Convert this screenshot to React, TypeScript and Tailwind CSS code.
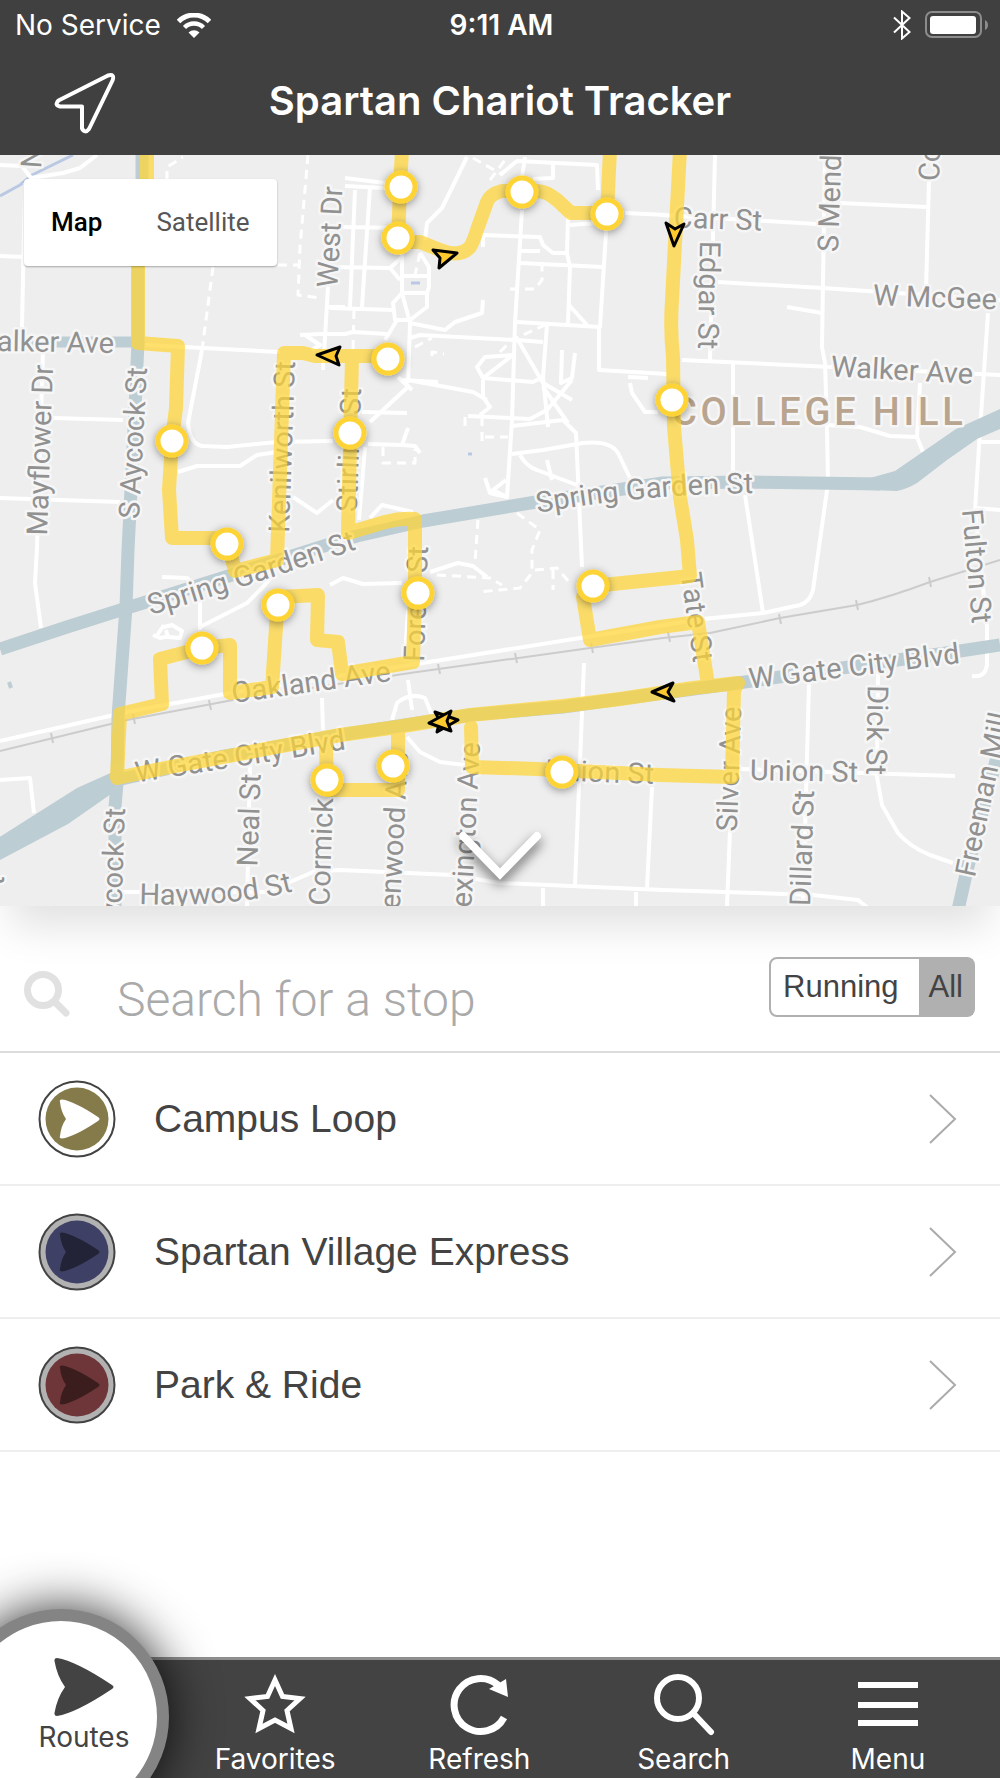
import { useState } from "react";
import type { ReactNode } from "react";
import clsx from "clsx";

interface MapLabel {
  text: string;
  x: number;
  y: number;
  rotate: number;
  anchor?: "start" | "middle" | "end";
}

interface BusRoute {
  name: string;
  color: string;
  running: boolean;
}

const highways = [
  "M142 150V182L138 266V343L133 450L128 550L126 607L118 717L117 783L115 807V910",
  "M0 649L67 627L127 608L200 585L327 545L357 536L423 521L530 503L663 483L750 482L880 484",
  "M738 683L960 651L1000 645",
  "M117 780L220 757L340 735L470 715L563 707L620 699L738 683",
  "M958 910L967 870L997 757L1003 735",
];

const streets = [
  "M0 741L127 712L230 693L410 665L580 638L703 619L763 613L800 605Q810 602 813 590L828 483L827 427L825 363L822 347L825 154",
  "M0 165L22 166L31 178L63 173L80 168L97 155",
  "M25 183L22 327",
  "M0 256L25 257",
  "M43 350L37 547L35 583L41 628",
  "M53 418L123 420",
  "M0 498L120 502",
  "M145 345L280 352",
  "M202 350L188 423Q190 445 203 446L227 447L277 442L333 441",
  "M178 472L197 466L240 466L257 455L277 452",
  "M328 287L323 370",
  "M328 307L345 307",
  "M300 335L320 334L345 334L353 332L387 334",
  "M305 335L320 345L312 350",
  "M293 497L317 513L333 500",
  "M345 178L385 183M345 186L385 188M355 190L350 307M370 187L362 307",
  "M343 227L398 228M330 267L390 268L402 257M330 308L393 310M390 268L400 280",
  "M402 245V293L393 303L395 320H410L427 307V293L429 287V267L420 253",
  "M402 276H429M402 293H427",
  "M402 293L410 323L445 330L455 322L482 313L483 300",
  "M385 340L397 320M410 323L408 383M410 338L420 335L517 340L543 342",
  "M467 157L442 208L427 223L425 240",
  "M522 210L515 323L512 420L507 497",
  "M517 322L600 327L607 217M599 327V370L667 374",
  "M483 247V235L540 237L543 245L553 253H567L570 267L568 323M568 217L567 253",
  "M520 263L603 267M520 251H540M569 305L587 325M570 225L597 223",
  "M625 213L667 215",
  "M500 175L517 161L597 165L598 190M553 163V178L533 179M525 157L522 177",
  "M513 355L485 357L477 367L483 378L533 382L543 377L547 325M513 355L483 378",
  "M518 340L543 383L572 400M543 377L548 427M562 350L561 383L572 378L575 353",
  "M468 416L530 419L547 410L572 380M512 426L563 420L576 433L582 567",
  "M543 387L568 423M483 380V397L490 407L480 415",
  "M408 380L473 392L487 400M403 380L438 382M410 385L370 422M398 377L412 390",
  "M362 412L407 413M408 428L402 445L368 444M402 445L415 446L420 453",
  "M365 447L359 520M370 518L382 505L413 512",
  "M512 454L543 450L583 443Q610 440 618 453L630 478",
  "M520 455Q527 467 537 470L577 485M547 460L552 480",
  "M485 478L490 493L507 497L493 490L506 480",
  "M630 383L632 393L645 412H658M628 377L648 378",
  "M715 155L710 360",
  "M660 215L817 224",
  "M840 203L927 207",
  "M929 180L926 290",
  "M718 282L823 288L1000 300",
  "M787 307L822 313",
  "M682 360L1000 375",
  "M733 363V473",
  "M988 313L980 430L975 510L987 627V665Q985 678 972 676",
  "M978 442H1000M975 508L1000 510",
  "M920 383L917 437L923 452M827 425L860 427L890 436L917 437",
  "M745 495L753 547L763 613",
  "M809 683L803 906",
  "M878 673L877 777L882 805L898 833Q910 847 930 855L953 863",
  "M740 769L955 776",
  "M730 830L727 906",
  "M123 892H267L313 872L340 870L453 875L500 883L663 890L813 895L858 900L868 908",
  "M584 663L575 885M652 787L647 888M543 888V906M636 892V906",
  "M408 680L412 710M392 720L397 703Q410 692 425 698L432 715",
  "M407 737L420 752L440 762L465 765",
  "M330 585L343 578L363 584L402 583M430 572L458 563L473 566L487 577",
  "M408 610L405 657",
  "M162 577L187 578L200 590V630M200 627L247 603L263 587L275 573",
  "M164 625L156 637M153 635L160 638L170 636M164 627L172 625L182 631L180 638L168 637L166 630",
  "M0 780L30 778L34 813",
  "M322 698L323 730M250 763L247 906",
];

const footpaths = [
  "M213 267L202 350",
  "M167 180V167L183 157",
  "M308 155L300 247L298 295L320 298",
  "M278 265H298",
  "M354 310L353 350",
  "M473 158L503 175M490 180L505 160",
  "M510 289H535L542 280V263",
  "M420 253L415 275",
  "M500 352L512 340L545 325",
  "M383 447V463H415V449",
  "M482 417V443M465 417V430M485 437H508",
  "M432 356V352L444 354M415 347L432 338",
  "M478 520L475 563",
  "M517 513L540 530L532 550V573L520 588L478 592",
  "M535 570L557 568L570 583M553 570V590",
  "M437 575L490 578L502 585",
];

const railTicks = [
  [52, 738], [134, 719], [210, 705], [439, 669], [516, 658],
  [592, 648], [669, 637], [780, 619], [857, 605], [930, 582],
];

const labels: MapLabel[] = [
  { text: "alker Ave", x: 114, y: 343, rotate: 1, anchor: "end" },
  { text: "Walker Ave", x: 902, y: 370, rotate: 3 },
  { text: "West Dr", x: 330, y: 237, rotate: -87 },
  { text: "Mayflower Dr", x: 40, y: 450, rotate: -88 },
  { text: "S Aycock St", x: 133, y: 443, rotate: -87 },
  { text: "Kenilworth St", x: 282, y: 447, rotate: -88 },
  { text: "Stirling St", x: 349, y: 450, rotate: -88 },
  { text: "Forest St", x: 416, y: 604, rotate: -88 },
  { text: "Oakland Ave", x: 311, y: 682, rotate: -8 },
  { text: "W Gate City Blvd", x: 240, y: 756, rotate: -9 },
  { text: "W Gate City Blvd", x: 854, y: 666, rotate: -7 },
  { text: "Carr St", x: 718, y: 219, rotate: 2 },
  { text: "Edgar St", x: 709, y: 295, rotate: 91 },
  { text: "S Mend", x: 828, y: 252, rotate: -88, anchor: "start" },
  { text: "Co", x: 929, y: 181, rotate: -88, anchor: "start" },
  { text: "W McGee", x: 873, y: 295, rotate: 2, anchor: "start" },
  { text: "Tate St", x: 697, y: 617, rotate: 82 },
  { text: "Fulton St", x: 977, y: 566, rotate: 85 },
  { text: "Dick St", x: 877, y: 730, rotate: 91 },
  { text: "Silver Ave", x: 729, y: 769, rotate: -88 },
  { text: "Dillard St", x: 802, y: 848, rotate: -88 },
  { text: "Union St", x: 804, y: 771, rotate: 1 },
  { text: "Union St", x: 600, y: 772, rotate: 2 },
  { text: "Freeman Mill", x: 965, y: 876, rotate: -78, anchor: "start" },
  { text: "Neal St", x: 249, y: 820, rotate: -88 },
  { text: "ycock St", x: 115, y: 808, rotate: -88, anchor: "end" },
  { text: "Cormick", x: 323, y: 798, rotate: -88, anchor: "end" },
  { text: "enwood Ave", x: 398, y: 752, rotate: -87, anchor: "end" },
  { text: "exington Ave", x: 470, y: 742, rotate: -87, anchor: "end" },
  { text: "N", x: 31, y: 168, rotate: -86, anchor: "start" },
  { text: "t", x: -6, y: 876, rotate: -88, anchor: "end" },
];

const routePaths = [
  "M147 150V182L138 266V343L178 346L176 408L172 440L169 490L172 538H227L235 571L277 560L284 353H303L315 356H388",
  "M352 357L348 533L385 522Q400 518 415 519V594L413 662L342 674L338 642L317 640L318 595L278 597L272 687L230 693V645L202 648L160 659L162 704L120 714L117 778L170 767L340 735L397 727L470 715L563 706L620 699L693 688L738 683L734 690L732 777L660 775L537 769L472 767L471 727",
  "M707 678L698 622L660 627L590 640L583 597L593 586L690 576L687 540L680 497L674 427L673 357Q670 330 672 300L680 150",
  "M326 745L327 790H398V733",
  "M402 150L400 187L398 242H420L440 250Q460 258 470 247Q473 243 478 227L487 202Q490 194 502 191H535Q545 190 557 200L571 213H607L610 150",
];

const stops = [
  [401, 187], [398, 238], [522, 192], [607, 214], [388, 359], [350, 433],
  [672, 400], [172, 441], [227, 544], [278, 605], [202, 648], [418, 593],
  [593, 586], [327, 780], [393, 766], [562, 772],
];

const busArrows = [
  "457,253 433,250 440,258 439,268",
  "317,355 340,347 336,356 339,365",
  "674,246 666,223 675,229 684,224",
  "652,692 673,683 668,692 674,701",
  "458,720 435,712 440,721 437,732",
  "429,723 451,711 447,721 451,731",
];

const routes: BusRoute[] = [
  { name: "Campus Loop", color: "#857b4a", running: true },
  { name: "Spartan Village Express", color: "#3f4065", running: false },
  { name: "Park & Ride", color: "#6e3638", running: false },
];

function RouteMap() {
  return (
    <svg
      viewBox="0 155 1000 751"
      className="block h-auto w-full bg-[#eeeeee]"
      role="img"
      aria-label="Route map"
    >
      <defs>
        <filter id="stop-shadow" x="-50%" y="-50%" width="200%" height="200%">
          <feDropShadow dx="0" dy="2" stdDeviation="4" floodOpacity="0.4" />
        </filter>
        <path id="spring-garden-west" d="M151 615Q230 592 372 544" />
        <path id="spring-garden-east" d="M538 513Q645 493 775 493" />
        <path id="haywood" d="M139 904Q245 908 310 886" />
      </defs>

      <g fill="none" strokeLinejoin="round">
        <path d="M0 196L20 185L32 175L73 155" stroke="#b9c9e4" strokeWidth="3" />
        <g stroke="#ffffff" strokeWidth="4">
          {streets.map((d) => (
            <path key={d} d={d} />
          ))}
        </g>
        <g stroke="#ffffff" strokeWidth="3" strokeDasharray="9 6">
          {footpaths.map((d) => (
            <path key={d} d={d} />
          ))}
        </g>
        <g stroke="#cccccc" strokeWidth="2">
          <path d="M0 751L127 720L233 700L410 673L590 648L663 638L710 633L780 618L857 605Q890 597 930 582L1000 560" />
          {railTicks.map(([x, y]) => (
            <path key={x} d={`M${x - 1} ${y - 5}L${x + 1} ${y + 5}`} />
          ))}
        </g>
        <path d="M0 342H138" stroke="#bdcdd4" strokeWidth="11" />
        <g stroke="#bdcdd4" strokeWidth="13">
          {highways.map((d) => (
            <path key={d} d={d} />
          ))}
        </g>
        {/* stretches where the highways widen */}
        <g fill="#bdcdd4">
          <path d="M870 478L895 471L956 429L1000 409V429L977 439L947 460L917 483Q907 489 897 491L870 490Z" />
          <path d="M-2 838L77 788L115 771L124 785L68 824L-2 861Z" />
        </g>
        <path d="M9 682L11 688" stroke="#bdcdd4" strokeWidth="4" />
        <path d="M411 283H420M468 454H472" stroke="#b9c9e4" strokeWidth="3" />
      </g>

      <g
        className="font-[Roboto,sans-serif] text-[29px] [paint-order:stroke]"
        fill="#919191"
        stroke="#f6f6f6"
        strokeWidth="5"
        strokeLinejoin="round"
      >
        {labels.map((label) => (
          <text
            key={`${label.text}-${label.x}`}
            textAnchor={label.anchor ?? "middle"}
            transform={`translate(${label.x} ${label.y}) rotate(${label.rotate})`}
            dy="10"
          >
            {label.text}
          </text>
        ))}
        <text>
          <textPath href="#spring-garden-west">Spring Garden St</textPath>
        </text>
        <text>
          <textPath href="#spring-garden-east">Spring Garden St</textPath>
        </text>
        <text>
          <textPath href="#haywood">Haywood St</textPath>
        </text>
        <text
          x="672"
          y="425"
          fill="#b9a48f"
          className="text-[38px] font-medium tracking-widest"
        >
          COLLEGE HILL
        </text>
      </g>

      <g
        fill="none"
        stroke="#ffd535"
        strokeWidth="14"
        strokeLinejoin="round"
        strokeLinecap="round"
        opacity="0.72"
      >
        {routePaths.map((d) => (
          <path key={d} d={d} />
        ))}
      </g>

      <g fill="#ffffff" stroke="#fdd335" strokeWidth="5">
        {stops.map(([cx, cy]) => (
          <circle key={cx} cx={cx} cy={cy} r="14" filter="url(#stop-shadow)" />
        ))}
      </g>

      <g fill="#fdc92f" stroke="#000000" strokeWidth="3" strokeLinejoin="round">
        {busArrows.map((points) => (
          <polygon key={points} points={points} />
        ))}
      </g>
    </svg>
  );
}

function StatusBar() {
  return (
    <div className="grid h-[50px] grid-cols-3 items-center pr-3 pl-[15px] text-[28px] leading-[50px]">
      <div className="flex items-center gap-4">
        <span>No Service</span>
        <svg viewBox="0 0 34 25" className="h-[25px] w-[34px]" fill="none" stroke="#fff">
          <path d="M1.5 8.5a22 22 0 0 1 31 0" strokeWidth="5" />
          <path d="M7.5 14.500a13.500 13.500 0 0 1 19 0" strokeWidth="4.500" />
          <path d="M17 25l-5.500-5.500a8 8 0 0 1 11 0z" fill="#fff" stroke="none" />
        </svg>
      </div>
      <span className="text-center font-semibold">9:11 AM</span>
      <div className="flex items-center justify-end gap-[14px]">
        <svg viewBox="0 0 18 30" className="h-[30px] w-[18px]" fill="none" stroke="#fff" strokeWidth="2">
          <path d="M1 7.500L16.500 22L9 28.500V1.500L16.500 8L1 22.500" />
        </svg>
        <svg viewBox="0 0 63 28" className="h-[28px] w-[63px]">
          <rect x="1" y="1" width="55" height="25" rx="6" fill="none" stroke="#8c8c8c" strokeWidth="2" />
          <rect x="5" y="5" width="46" height="18" rx="3" fill="#fff" />
          <path d="M60 9q3 1.500 3 5t-3 5z" fill="#8c8c8c" />
        </svg>
      </div>
    </div>
  );
}

function RouteBadge({ color, running }: { color: string; running: boolean }) {
  return (
    <svg viewBox="0 0 78 78" className="size-[78px] shrink-0" aria-hidden="true">
      <circle cx="39" cy="39" r="37.500" fill={running ? "#ffffff" : "#b2b2b2"} stroke="#434343" strokeWidth="2" />
      <circle cx="39" cy="39" r="31.500" fill={color} />
      <path
        d="M22 22Q21 19.500 24 19.500Q36 21 60 37Q63 39 60 41Q36 57 24 58.500Q21 58.500 22 56Q23 46 28 39Q23 32 22 22Z"
        fill={running ? "#ffffff" : "#000000"}
        opacity={running ? 1 : 0.45}
      />
    </svg>
  );
}

function TabButton({ label, children }: { label: string; children: ReactNode }) {
  return (
    <button className="flex flex-1 flex-col items-center gap-2 pt-[14px]">
      <svg viewBox="0 0 62 62" className="size-[62px]" fill="none" stroke="#fff" aria-hidden="true">
        {children}
      </svg>
      <span className="text-[28px] leading-[30px]">{label}</span>
    </button>
  );
}

export default function App() {
  const [mapType, setMapType] = useState("Map");
  const [filter, setFilter] = useState("All");

  return (
    <div className="relative flex min-h-screen flex-col overflow-hidden bg-white font-[Inter,sans-serif] text-[#434343]">
      <header className="bg-[#404040] text-white">
        <StatusBar />
        <div className="grid h-[105px] grid-cols-[200px_1fr_200px] items-center">
          <button aria-label="My location" className="pl-[54px]">
            <svg viewBox="0 0 62 62" className="size-[62px]" fill="none" stroke="#fff" strokeWidth="4" strokeLinejoin="round">
              <path d="M54 3.500Q61 1.500 58.500 8.500L35 57Q31 62 28 56.500V34.500H6Q0 33 4.500 28.500Z" />
            </svg>
          </button>
          <h1 className="pb-1 text-center text-[40px] leading-[48px] font-semibold whitespace-nowrap">
            Spartan Chariot Tracker
          </h1>
        </div>
      </header>

      {/* Map */}
      <section className="relative shadow-[0_30px_40px_-10px_rgba(0,0,0,0.12)]">
        <RouteMap />
        <div className="absolute top-6 left-6 flex rounded-[4px] bg-white font-[Roboto,sans-serif] text-[26px] leading-[87px] shadow-[0_1px_2px_rgba(0,0,0,0.3)]">
          {["Map", "Satellite"].map((type) => (
            <button
              key={type}
              onClick={() => setMapType(type)}
              className={clsx("px-[27px]", mapType === type ? "font-medium text-black" : "text-[#565656]")}
            >
              {type}
            </button>
          ))}
        </div>
        <button aria-label="Collapse map" className="absolute bottom-6 left-1/2 -translate-x-1/2 drop-shadow-[0_6px_6px_rgba(0,0,0,0.6)]">
          <svg viewBox="0 0 84 52" className="h-[52px] w-[84px]" fill="none" stroke="#fff" strokeWidth="8" strokeLinecap="round">
            <path d="M5 6L42 44L79 6" />
          </svg>
        </button>
      </section>

      {/* Stop search */}
      <div className="relative flex h-[147px] items-start border-b-2 border-[#dcdcdc] pt-[51px] pr-[25px] pl-6">
        <svg viewBox="0 0 46 46" className="mt-[14px] size-[46px] shrink-0" fill="none" stroke="#e1e1e1" aria-hidden="true">
          <circle cx="19" cy="19" r="15.500" strokeWidth="7" />
          <path d="M31 31L42 42" strokeWidth="7" strokeLinecap="round" />
        </svg>
        <input
          type="text"
          aria-label="Search for a stop"
          placeholder="Search for a stop"
          className="mt-[14px] ml-[47px] h-[58px] min-w-0 flex-1 bg-transparent font-[Roboto,sans-serif] text-[48px] leading-[58px] font-light outline-none placeholder:text-[#aaaaaa]"
        />
        <div className="flex rounded-[8px] border-2 border-[#b0b0b0] font-['Liberation_Sans',sans-serif] text-[31px] leading-[56px]">
          {["Running", "All"].map((option) => (
            <button
              key={option}
              onClick={() => setFilter(option)}
              className={clsx(
                "last:px-[10px] first:pr-5 first:pl-3",
                filter === option && "bg-[#b0b0b0]"
              )}
            >
              {option}
            </button>
          ))}
        </div>
      </div>

      {/* Routes */}
      <main className="flex-1">
        <ul>
          {routes.map((route) => (
            <li key={route.name} className="border-b-2 border-[#eeeeee]">
              <button className="flex h-[131px] w-full items-center pr-[43px] pl-[38px] text-left">
                <RouteBadge color={route.color} running={route.running} />
                <span className="ml-[38px] flex-1 font-['Liberation_Sans',sans-serif] text-[39px] leading-[44px]">
                  {route.name}
                </span>
                <svg viewBox="0 0 28 50" className="h-[50px] w-[28px]" fill="none" stroke="#ababab" strokeWidth="2" aria-hidden="true">
                  <path d="M1 1L26 25L1 49" />
                </svg>
              </button>
            </li>
          ))}
        </ul>
      </main>

      <nav className="relative flex h-[121px] border-t-[3px] border-[#8e8e8e] bg-[#434343] pr-[10px] pl-[173px] text-white">
        {/* Active tab bulges out of the bar's corner */}
        <button className="absolute -top-[51px] -left-[47px] flex size-[216px] flex-col items-center gap-[6px] rounded-full border-[12px] border-[#848484] bg-white pt-[37px] pl-[46px] text-[#434343] shadow-[0_0_50px_rgba(0,0,0,0.85)]">
          <svg viewBox="0 0 60 58" className="h-[58px] w-[60px]" fill="#434343" aria-hidden="true">
            <path d="M0.500 3Q0 0 3 0Q22 3 58 27Q61 29 58 31Q22 55 3 58Q0 58 0.500 55Q3 40 11 29Q3 18 0.500 3Z" />
          </svg>
          <span className="text-[28px] leading-[30px]">Routes</span>
        </button>
        <TabButton label="Favorites">
          <path
            d="M31 6L38.500 22.500L56 24.500L43 36.500L47 54.500L31 46L15 54.500L19 36.500L6 24.500L23.500 22.500Z"
            strokeWidth="5"
          />
        </TabButton>
        <TabButton label="Refresh">
          <path d="M56 43.500A26.500 26.500 0 1 1 50 11" strokeWidth="7" />
          <path d="M41 15L58 5L60 23Z" fill="#fff" stroke="none" />
        </TabButton>
        <TabButton label="Search">
          <circle cx="25" cy="24" r="21" strokeWidth="6" />
          <path d="M41 40L58 58" strokeWidth="6" strokeLinecap="round" />
        </TabButton>
        <TabButton label="Menu">
          <path d="M1 11H61M1 31H61M1 49H61" strokeWidth="6" />
        </TabButton>
      </nav>
    </div>
  );
}
